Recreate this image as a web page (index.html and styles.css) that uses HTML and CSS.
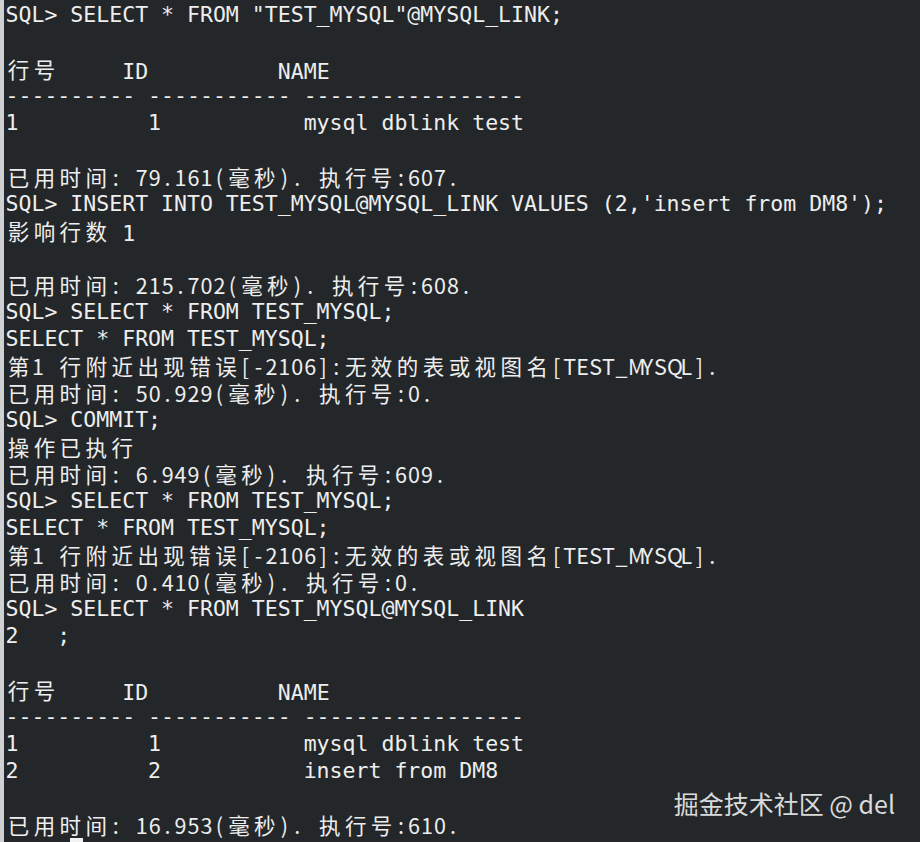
FILE: index.html
```html
<!DOCTYPE html>
<html lang="zh-CN">
<head>
<meta charset="utf-8">
<title>disql</title>
<link rel="stylesheet" href="styles.css">
</head>
<body>
<div class="term">
<div class="ln">SQL&gt; SELECT * FROM "TEST_MYSQL"@MYSQL_LINK;</div>
<div class="ln"></div>
<div class="ln g">行号     ID          NAME</div>
<div class="ln">---------- ----------- -----------------</div>
<div class="ln">1          1           mysql dblink test</div>
<div class="ln"></div>
<div class="ln g p">已用时间: 79.161(毫秒). 执行号:607.</div>
<div class="ln">SQL&gt; INSERT INTO TEST_MYSQL@MYSQL_LINK VALUES (2,'insert from DM8');</div>
<div class="ln g">影响行数 1</div>
<div class="ln"></div>
<div class="ln g p">已用时间: 215.702(毫秒). 执行号:608.</div>
<div class="ln">SQL&gt; SELECT * FROM TEST_MYSQL;</div>
<div class="ln">SELECT * FROM TEST_MYSQL;</div>
<div class="ln g p">第1 行附近出现错误[-2106]:无效的表或视图名[TEST_MYSQL].</div>
<div class="ln g p">已用时间: 50.929(毫秒). 执行号:0.</div>
<div class="ln">SQL&gt; COMMIT;</div>
<div class="ln g">操作已执行</div>
<div class="ln g p">已用时间: 6.949(毫秒). 执行号:609.</div>
<div class="ln">SQL&gt; SELECT * FROM TEST_MYSQL;</div>
<div class="ln">SELECT * FROM TEST_MYSQL;</div>
<div class="ln g p">第1 行附近出现错误[-2106]:无效的表或视图名[TEST_MYSQL].</div>
<div class="ln g p">已用时间: 0.410(毫秒). 执行号:0.</div>
<div class="ln">SQL&gt; SELECT * FROM TEST_MYSQL@MYSQL_LINK</div>
<div class="ln">2   ;</div>
<div class="ln"></div>
<div class="ln g">行号     ID          NAME</div>
<div class="ln">---------- ----------- -----------------</div>
<div class="ln">1          1           mysql dblink test</div>
<div class="ln">2          2           insert from DM8</div>
<div class="ln"></div>
<div class="ln g p">已用时间: 16.953(毫秒). 执行号:610.</div>
<div class="ln">SQL&gt; <span class="cur"> </span></div>
</div>
<div class="mark">掘金技术社区 @ del</div>
<script src="script.js"></script>
</body>
</html>
```
FILE: styles.css
```css
:root {
  --cw: 12.97px;
}
html, body {
  margin: 0;
  padding: 0;
  height: 100%;
  overflow: hidden;
  background: #24272a;
}
body {
  position: relative;
}
.term {
  border-left: 4px solid #cfd0d1;
  padding: 1px 0 0 1.5px;
  min-height: 100%;
  box-sizing: border-box;
  color: #eeeeee;
  font-family: "DejaVu Sans Mono", "Noto Sans CJK SC", monospace;
  font-size: 21.54px;
}
.ln {
  height: 27px;
  line-height: 27px;
  white-space: pre;
}
.c {
  display: inline-block;
  width: var(--cw);
  text-align: center;
  line-height: 27px;
}
.c.w {
  width: calc(var(--cw) * 2);
  font-family: "Noto Sans CJK SC", sans-serif;
  font-size: 21.5px;
  vertical-align: 1px;
}
.p {
  font-family: "Noto Sans CJK SC", sans-serif;
  font-size: 21.5px;
}
.p .c {
  vertical-align: 2px;
}
.cur {
  display: inline-block;
  width: var(--cw);
  height: 27px;
  background: #f2f2f2;
  vertical-align: top;
}
.mark {
  position: absolute;
  right: 25px;
  top: 788px;
  font-family: "Noto Sans CJK SC", sans-serif;
  font-size: 25px;
  line-height: 30px;
  color: #dadada;
  white-space: pre;
}
```
FILE: script.js
```js
document.querySelectorAll('.g').forEach(function (line) {
  var text = line.textContent;
  line.textContent = '';
  Array.from(text).forEach(function (ch) {
    var s = document.createElement('span');
    s.className = ch.charCodeAt(0) > 0x2000 ? 'c w' : 'c';
    s.textContent = ch;
    line.appendChild(s);
  });
});
```
